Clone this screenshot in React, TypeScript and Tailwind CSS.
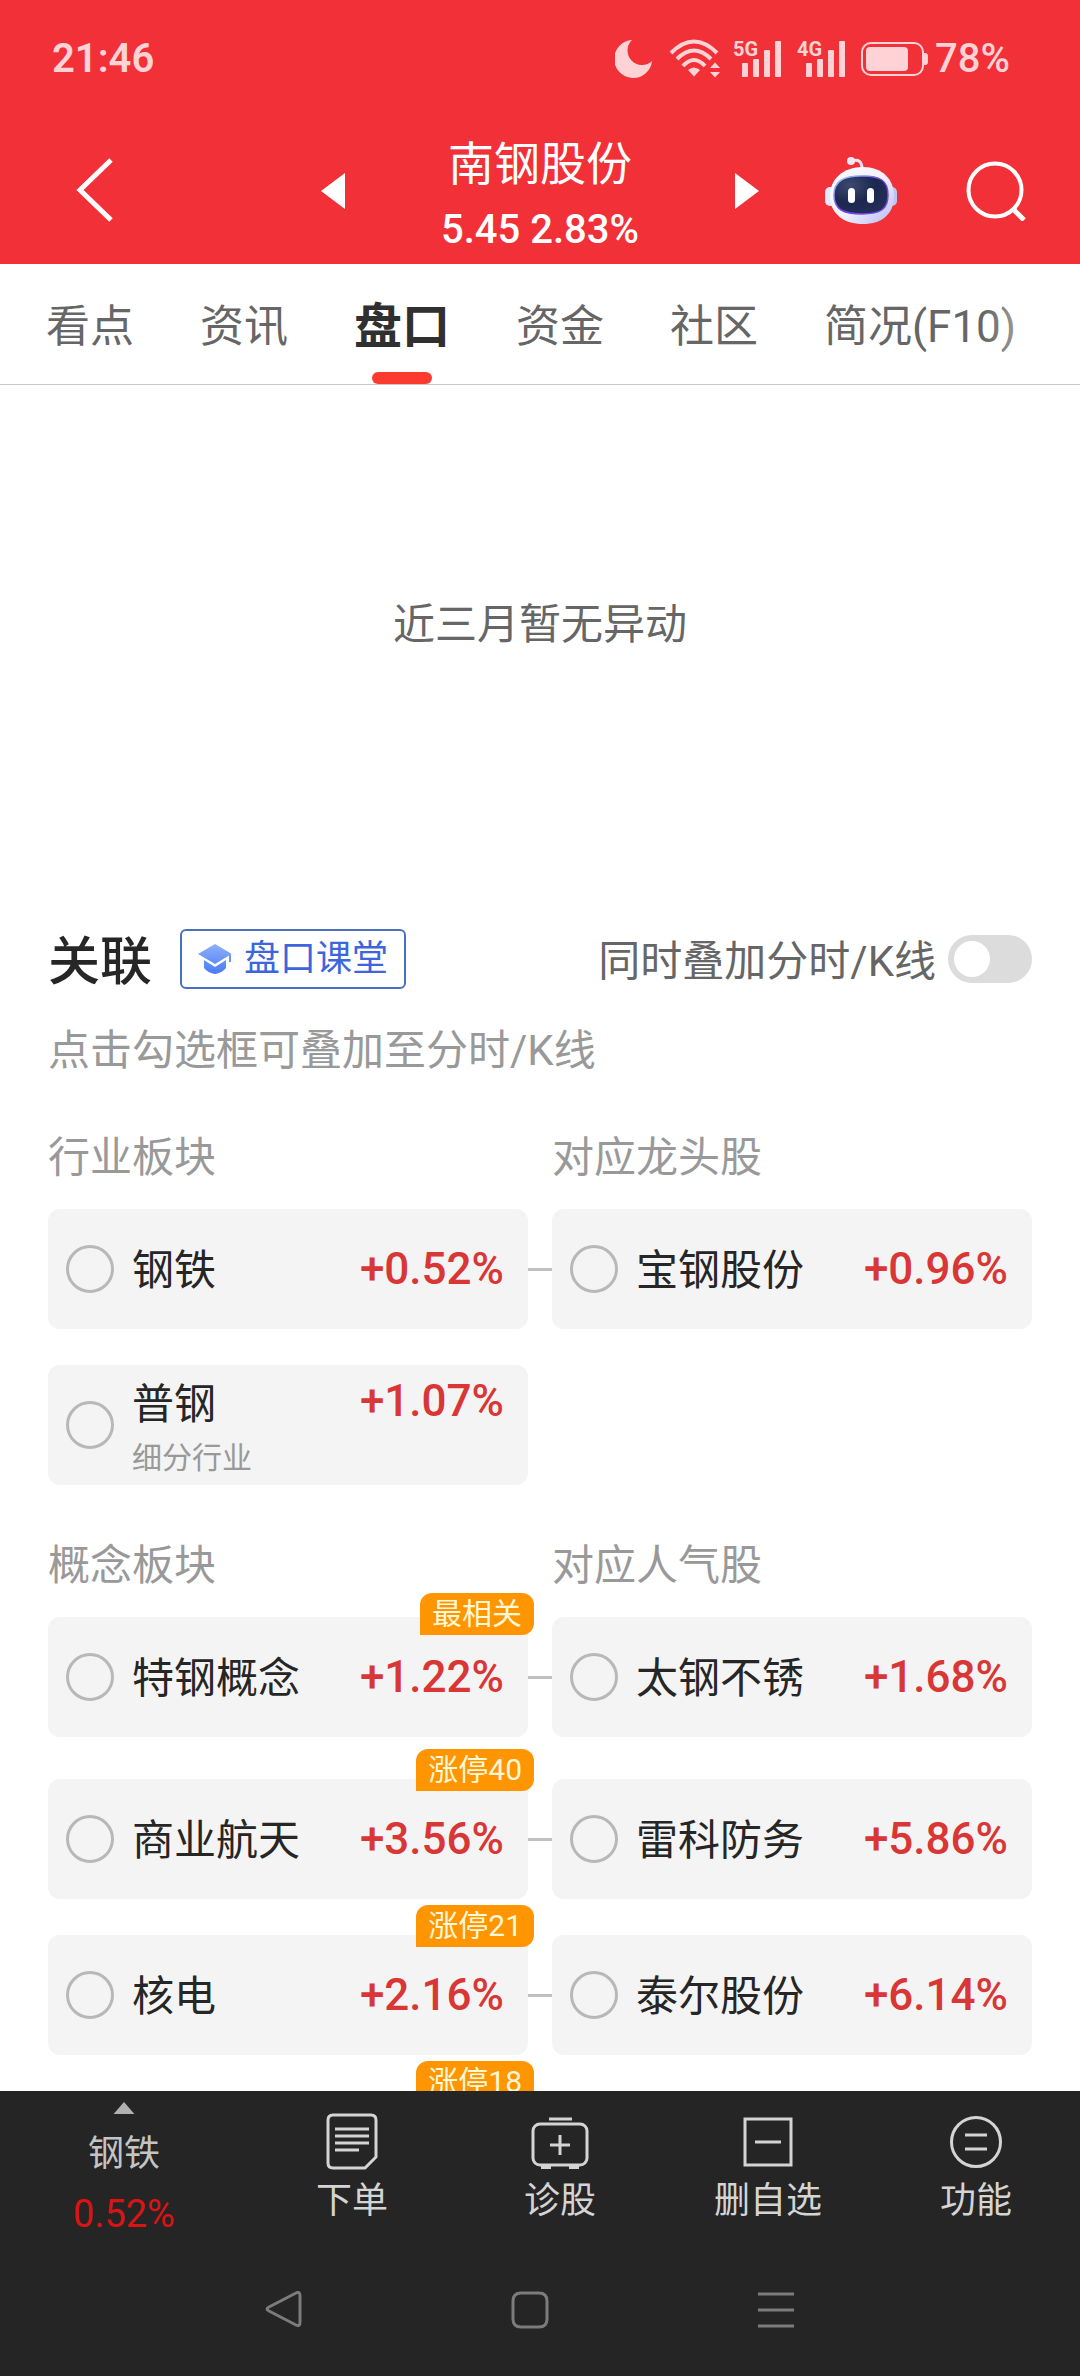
import clsx from "clsx";
import React, { useState } from "react";

type Quote = { name: string; change: string; note?: string };
type Pair = { board: Quote; stock?: Quote; badge?: string };

const TABS = ["看点", "资讯", "盘口", "资金", "社区", "简况(F10)"];

const INDUSTRY_PAIRS: Pair[] = [
  {
    board: { name: "钢铁", change: "+0.52%" },
    stock: { name: "宝钢股份", change: "+0.96%" },
  },
  { board: { name: "普钢", change: "+1.07%", note: "细分行业" } },
];

const CONCEPT_PAIRS: Pair[] = [
  {
    board: { name: "特钢概念", change: "+1.22%" },
    stock: { name: "太钢不锈", change: "+1.68%" },
    badge: "最相关",
  },
  {
    board: { name: "商业航天", change: "+3.56%" },
    stock: { name: "雷科防务", change: "+5.86%" },
    badge: "涨停40",
  },
  {
    board: { name: "核电", change: "+2.16%" },
    stock: { name: "泰尔股份", change: "+6.14%" },
    badge: "涨停21",
  },
  { board: { name: "", change: "" }, badge: "涨停18" },
];

const SignalIcon = ({ label }: { label: string }) => (
  <div className="relative h-10 w-12">
    <span className="absolute top-0 left-0 text-xl leading-5 font-bold">
      {label}
    </span>
    <svg viewBox="0 0 48 40" className="h-10 w-12" fill="currentColor">
      <rect x="9" y="24" width="6" height="14" rx="1" />
      <rect x="20" y="20" width="6" height="18" rx="1" />
      <rect x="31" y="11" width="6" height="27" rx="1" />
      <rect x="42" y="2" width="6" height="36" rx="1" />
    </svg>
  </div>
);

const StatusBar = () => (
  <div className="flex h-[118px] items-center justify-between pr-[70px] pl-[52px] text-[#ffd3d5]">
    <span className="text-[40px] leading-none font-semibold">21:46</span>
    <div className="flex items-center">
      <svg viewBox="0 0 38 40" className="h-10 w-[38px]" fill="currentColor">
        <path d="M17 1A19 19 0 1 0 37 22 A14.500 14.500 0 0 1 17 1Z" />
      </svg>
      <svg
        viewBox="0 0 52 40"
        className="ml-4 h-10 w-[52px]"
        fill="none"
        stroke="currentColor"
        strokeWidth="4"
      >
        <path d="M2 14Q25-9 48 14M8 20Q25 3 42 20M14 27Q25 15 36 27" />
        <path
          d="M19 31Q25 26 31 31L25 37.500ZM41 29L46 23.500L51 29ZM41 33L46 38.500L51 33Z"
          fill="currentColor"
          stroke="none"
        />
      </svg>
      <div className="ml-3 flex gap-4">
        <SignalIcon label="5G" />
        <SignalIcon label="4G" />
      </div>
      <svg viewBox="0 0 68 40" className="ml-4 h-10 w-[68px]">
        <rect
          x="1"
          y="4"
          width="61"
          height="32"
          rx="9"
          fill="none"
          stroke="currentColor"
          strokeWidth="2"
        />
        <rect x="5" y="8" width="42" height="24" rx="4" fill="currentColor" />
        <path d="M63 14h1q3 0 3 3v6q0 3-3 3h-1Z" fill="currentColor" />
      </svg>
      <span className="ml-1.5 text-[40px] leading-none font-medium">78%</span>
    </div>
  </div>
);

const RobotIcon = () => (
  <svg viewBox="0 0 72 68" className="h-[68px] w-[72px]">
    <defs>
      <linearGradient id="shell" x1="0" y1="0" x2="1" y2="1">
        <stop offset="0" stopColor="#fff" />
        <stop offset="0.55" stopColor="#f0effc" />
        <stop offset="1" stopColor="#b4b9f0" />
      </linearGradient>
      <linearGradient id="rim" x1="0" y1="0" x2="1" y2="1">
        <stop offset="0" stopColor="#a5dcff" />
        <stop offset="0.5" stopColor="#6b3fe0" />
        <stop offset="1" stopColor="#7a4cf0" />
      </linearGradient>
      <radialGradient id="face" cx="0.3" cy="0.25" r="0.9">
        <stop offset="0" stopColor="#3d4a70" />
        <stop offset="0.5" stopColor="#1c2850" />
        <stop offset="1" stopColor="#26305a" />
      </radialGradient>
    </defs>
    <path
      d="M27 4Q37 1 37 12"
      fill="none"
      stroke="#f3dfee"
      strokeWidth="3"
      strokeLinecap="round"
    />
    <circle cx="26" cy="4" r="4" fill="#f4e8f5" />
    <rect x="0" y="30" width="12" height="19" rx="5" fill="#e6e8fb" />
    <rect x="60" y="30" width="12" height="19" rx="5" fill="#bfc5f2" />
    <path
      d="M38 10C57 10 69 22 69 39C69 57 57 67 38 67S5 57 5 39C5 22 18 10 38 10Z"
      fill="url(#shell)"
    />
    <path
      d="M37 19C56 19 63 24 63 38S56 57 37 57S9 52 9 38S18 19 37 19Z"
      fill="url(#face)"
      stroke="url(#rim)"
      strokeWidth="1.500"
    />
    <rect x="23" y="31" width="7" height="15" rx="3.500" fill="#fff" />
    <rect x="42" y="31" width="7" height="15" rx="3.500" fill="#fff" />
  </svg>
);

const StockHeader = () => (
  <div className="grid h-[146px] grid-cols-[1fr_438px_1fr] items-center">
    <div className="flex pl-[75px]">
      <button aria-label="返回">
        <svg
          viewBox="0 0 40 66"
          className="h-[66px] w-10"
          fill="none"
          stroke="#fff"
          strokeWidth="5"
        >
          <path d="M36 2L5 32L36 62" />
        </svg>
      </button>
    </div>
    <div className="flex items-center justify-between">
      <button aria-label="上一只">
        <svg viewBox="0 0 24 36" className="h-9 w-6" fill="#fff">
          <path d="M24 0V36L0 18Z" />
        </svg>
      </button>
      <div className="flex flex-col items-center pt-3">
        <h1 className="text-[46px] leading-[66px]">南钢股份</h1>
        <p className="text-[40px] leading-[66px] font-medium">5.45 2.83%</p>
      </div>
      <button aria-label="下一只">
        <svg viewBox="0 0 24 36" className="h-9 w-6" fill="#fff">
          <path d="M0 0V36L24 18Z" />
        </svg>
      </button>
    </div>
    <div className="flex items-center justify-between pr-[54px] pl-[66px]">
      <button aria-label="智能助手">
        <RobotIcon />
      </button>
      <button aria-label="搜索">
        <svg
          viewBox="0 0 60 60"
          className="h-[60px] w-[60px]"
          fill="none"
          stroke="#fff"
          strokeWidth="4"
        >
          <circle cx="29" cy="29" r="26.500" />
          <path d="M47 48L58 59" strokeWidth="5" />
        </svg>
      </button>
    </div>
  </div>
);

const TabBar = () => {
  const [active, setActive] = useState("盘口");
  return (
    <nav className="relative flex h-[121px] shrink-0 gap-[66px] overflow-hidden border-b border-[#c8c8c8] pl-[46px]">
      {TABS.map((tab) => (
        <button
          key={tab}
          onClick={() => setActive(tab)}
          className={clsx(
            "relative h-full shrink-0 pt-1.5 whitespace-nowrap",
            tab === active
              ? "text-5xl font-bold text-[#303030]"
              : "text-[44px] text-[#666]",
          )}
        >
          {tab}
          {tab === active && (
            <span className="absolute bottom-0 left-1/2 h-3 w-[60px] -translate-x-1/2 rounded-full bg-[#fb3a30]" />
          )}
        </button>
      ))}
      <div className="pointer-events-none absolute inset-y-0 right-0 w-24 bg-linear-to-l from-white to-transparent" />
    </nav>
  );
};

const QuoteCard = ({ quote, badge }: { quote: Quote; badge?: string }) => (
  <label className="relative flex h-[120px] items-center rounded-xl bg-[#f4f4f4] pr-6 pl-[18px]">
    <input
      type="checkbox"
      className="size-12 appearance-none rounded-full border-3 border-[#b8b8b8] checked:bg-[#e03434]"
    />
    <span
      className={clsx(
        "ml-[18px] flex flex-1 flex-col",
        quote.note ? "pt-2.5" : "pt-1",
      )}
    >
      <span className="text-[42px] leading-[56px] text-[#262626]">
        {quote.name}
      </span>
      {quote.note && (
        <span className="text-3xl leading-[50px] text-[#999]">
          {quote.note}
        </span>
      )}
    </span>
    <span
      className={clsx(
        "text-[44px] leading-[56px] font-medium text-[#d93636]",
        quote.note && "self-start pt-2",
      )}
    >
      {quote.change}
    </span>
    {badge && (
      <span
        className={clsx(
          "absolute -right-1.5 rounded-xl rounded-bl-none bg-[#ff9500] px-3 text-3xl leading-[42px] text-[#fff8d8]",
          badge === "最相关" ? "-top-6" : "-top-[30px]",
        )}
      >
        {badge}
      </span>
    )}
  </label>
);

const PairList = ({
  titles,
  pairs,
  className,
}: {
  titles: [string, string];
  pairs: Pair[];
  className?: string;
}) => (
  <section className={className}>
    <div className="grid grid-cols-2 gap-6 text-[42px] leading-[60px] text-[#999]">
      <h3>{titles[0]}</h3>
      <h3>{titles[1]}</h3>
    </div>
    <div className="mt-[21px] flex flex-col gap-9">
      {pairs.map(({ board, stock, badge }) => (
        <div
          key={badge ?? board.name}
          className={clsx(
            "grid grid-cols-[1fr_24px_1fr] items-center",
            badge === "最相关" && "pb-1.5",
          )}
        >
          <QuoteCard quote={board} badge={badge} />
          {stock && (
            <>
              <div className="h-[3px] bg-[#c0c0c0]" />
              <QuoteCard quote={stock} />
            </>
          )}
        </div>
      ))}
    </div>
  </section>
);

const Related = () => (
  <div className="px-12 pt-[66px]">
    <div className="flex h-[60px] items-center">
      <h2 className="pt-2 text-[52px] leading-[60px] font-medium text-[#262626]">
        关联
      </h2>
      <button className="ml-7 flex h-[60px] items-center rounded-md border-2 border-[#4a70c4] px-4 text-4xl text-[#3d66dc]">
        <svg viewBox="0 0 34 32" className="mr-3 h-8 w-[34px]">
          <defs>
            <linearGradient id="cap" x1="0" y1="0" x2="0" y2="1">
              <stop offset="0" stopColor="#8fb0fb" />
              <stop offset="1" stopColor="#4a7af5" />
            </linearGradient>
          </defs>
          <path
            d="M17 1L33 10.500V19H31V12.500L17 21L0 11ZM6 17L17 24L28 17V25Q24 30 17 31Q10 30 6 25Z"
            fill="url(#cap)"
          />
        </svg>
        盘口课堂
      </button>
      <label className="ml-auto flex items-center gap-3 text-[42px] leading-[60px] text-[#666]">
        <span className="pt-1.5">同时叠加分时/K线</span>
        <input
          type="checkbox"
          role="switch"
          className="h-12 w-[84px] appearance-none rounded-full bg-[#dcdcdc] p-1.5 before:block before:size-9 before:rounded-full before:bg-white checked:bg-[#e03434] checked:before:ml-9"
        />
      </label>
    </div>
    <p className="mt-8 text-[42px] leading-[60px] text-[#999]">
      点击勾选框可叠加至分时/K线
    </p>
    <PairList
      titles={["行业板块", "对应龙头股"]}
      pairs={INDUSTRY_PAIRS}
      className="mt-[47px]"
    />
    <PairList
      titles={["概念板块", "对应人气股"]}
      pairs={CONCEPT_PAIRS}
      className="mt-[51px]"
    />
  </div>
);

const ACTIONS = [
  {
    label: "下单",
    icon: (
      <>
        <path d="M11 4H49Q54 4 54 9V46L43 57H11Q6 57 6 52V9Q6 4 11 4Z" />
        <path d="M13 18H47M13 25H47M13 32H47M13 39H37" />
      </>
    ),
  },
  {
    label: "诊股",
    icon: (
      <>
        <path d="M19 8H42" />
        <rect x="3" y="13" width="54" height="41" rx="7" />
        <path d="M30 24V44M20 34H40M11 56.500H21M39 56.500H49" />
      </>
    ),
  },
  {
    label: "删自选",
    icon: (
      <>
        <rect x="7" y="8" width="46" height="46" />
        <path d="M17 31H43" />
      </>
    ),
  },
  {
    label: "功能",
    icon: (
      <>
        <circle cx="30" cy="31" r="24.500" />
        <path d="M19 24H41M19 38H41" />
      </>
    ),
  },
];

const SYSTEM_KEYS = [
  { label: "后退", d: "M4 16L31 2Q35 0 35 5V31Q35 36 31 34L4 20Q0 18 4 16Z" },
  {
    label: "主屏",
    d: "M10 2H28Q36 2 36 10V28Q36 36 28 36H10Q2 36 2 28V10Q2 2 10 2Z",
  },
  { label: "菜单", d: "M1 3H37M1 19H37M1 35H37" },
];

const BottomBar = () => (
  <footer className="shrink-0 bg-[#252525]">
    <div className="flex h-[153px] text-4xl text-[#d4d4d4]">
      <button className="flex w-[248px] flex-col items-center pt-[11px] text-[#c4c4c4]">
        <svg viewBox="0 0 26 15" className="h-[15px] w-[26px]" fill="#b0b0b0">
          <path d="M13 0L26 15H0Z" />
        </svg>
        <span className="mt-2.5 leading-[60px]">钢铁</span>
        <span className="text-[38px] leading-[60px] text-[#da1414]">0.52%</span>
      </button>
      {ACTIONS.map(({ label, icon }) => (
        <button
          key={label}
          className="flex flex-1 flex-col items-center pt-5"
        >
          <svg
            viewBox="0 0 60 60"
            className="size-[60px]"
            fill="none"
            stroke="currentColor"
            strokeWidth="3"
          >
            {icon}
          </svg>
          <span className="leading-[60px]">{label}</span>
        </button>
      ))}
    </div>
    <div className="flex h-[132px] items-center justify-center gap-[208px] pr-5">
      {SYSTEM_KEYS.map(({ label, d }) => (
        <button key={label} aria-label={label}>
          <svg
            viewBox="0 0 38 38"
            className="size-[38px]"
            fill="none"
            stroke="#7c7c7c"
            strokeWidth="3"
          >
            <path d={d} />
          </svg>
        </button>
      ))}
    </div>
  </footer>
);

export default function App() {
  return (
    <div className="flex h-screen flex-col bg-white font-['Roboto','Noto_Sans_CJK_SC',sans-serif]">
      <header className="shrink-0 bg-[#f23038] text-white">
        <StatusBar />
        <StockHeader />
      </header>
      <TabBar />
      <main className="min-h-0 flex-1 overflow-y-auto [scrollbar-width:none]">
        <p className="flex h-[478px] items-center justify-center text-[42px] text-[#666]">
          近三月暂无异动
        </p>
        <Related />
      </main>
      <BottomBar />
    </div>
  );
}
